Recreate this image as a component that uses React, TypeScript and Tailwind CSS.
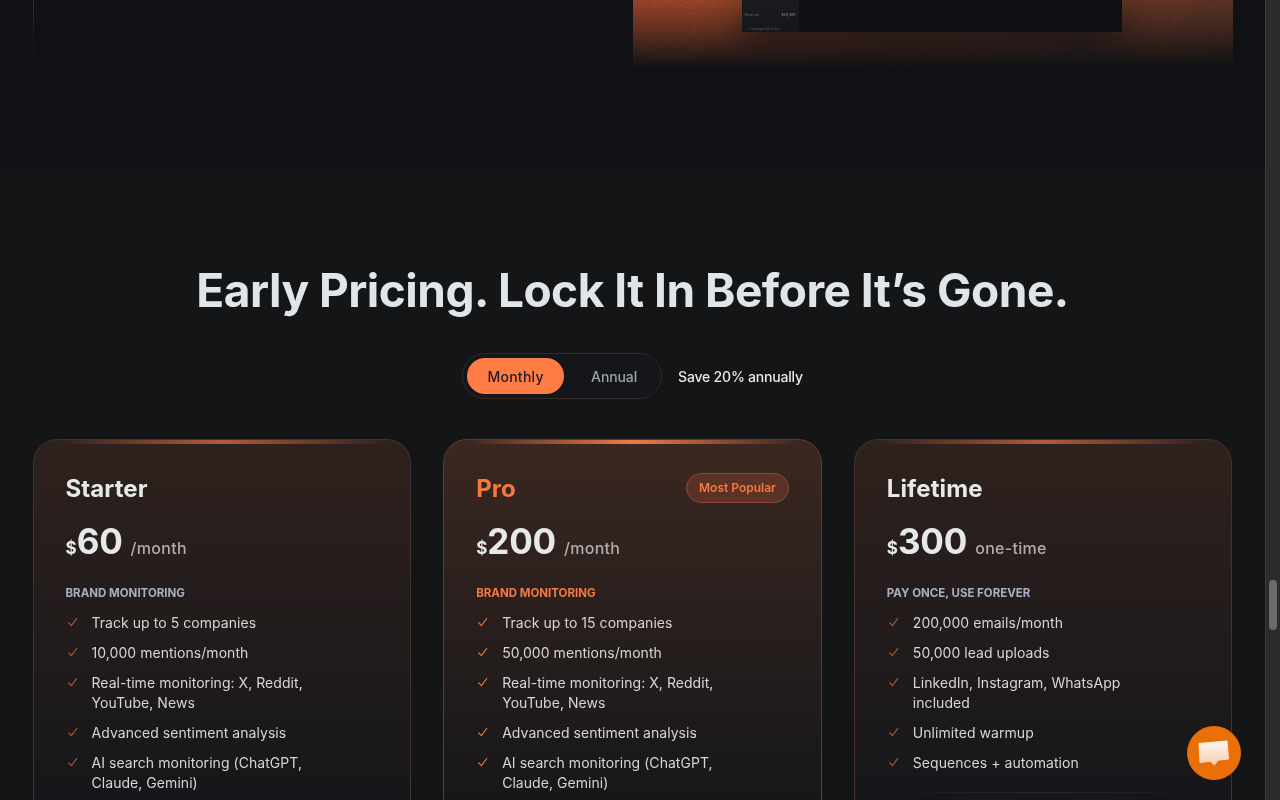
const font = { fontFamily: 'Inter, "Liberation Sans", sans-serif' };

function Check({ dim }: { dim?: boolean }) {
  return (
    <svg width="14" height="14" viewBox="0 0 14 14" fill="none" className={`mt-[2px] shrink-0 ${dim ? 'opacity-70' : ''}`}>
      <path d="M2.5 7.5 L5.4 10.6 L11 3.2" stroke="#e8703f" strokeWidth="1.1" />
    </svg>
  );
}

type Plan = {
  name: string;
  price: string;
  per: string;
  label: string;
  features: string[];
  pro?: boolean;
  divider?: boolean;
};

const plans: Plan[] = [
  {
    name: 'Starter',
    price: '60',
    per: '/month',
    label: 'BRAND MONITORING',
    features: ['Track up to 5 companies', '10,000 mentions/month', 'Real-time monitoring: X, Reddit, YouTube, News', 'Advanced sentiment analysis', 'AI search monitoring (ChatGPT, Claude, Gemini)'],
  },
  {
    name: 'Pro',
    price: '200',
    per: '/month',
    label: 'BRAND MONITORING',
    pro: true,
    features: ['Track up to 15 companies', '50,000 mentions/month', 'Real-time monitoring: X, Reddit, YouTube, News', 'Advanced sentiment analysis', 'AI search monitoring (ChatGPT, Claude, Gemini)'],
  },
  {
    name: 'Lifetime',
    price: '300',
    per: 'one-time',
    label: 'PAY ONCE, USE FOREVER',
    divider: true,
    features: ['200,000 emails/month', '50,000 lead uploads', 'LinkedIn, Instagram, WhatsApp included', 'Unlimited warmup', 'Sequences + automation'],
  },
];

function Card({ plan }: { plan: Plan }) {
  return (
    <div
      className={`relative h-[420px] rounded-[24px] border px-8 pt-[34px] ${
        plan.pro
          ? 'border-[#5c3c30] bg-gradient-to-b from-[#3b2720] to-[#15161a] to-[90%]'
          : 'border-[#44322b] bg-gradient-to-b from-[#2f211d] to-[#15161a] to-[90%]'
      }`}
    >
      <div
        className={`absolute left-[24px] right-[24px] top-0 h-[4px] bg-gradient-to-r from-transparent to-transparent ${
          plan.pro ? 'via-[#f07a4a]' : 'via-[#b25c3a]'
        }`}
      />
      <div className="flex h-[30px] items-center justify-between">
        <h3 className={`text-[24px] font-bold tracking-[0.1px] ${plan.pro ? 'text-[#f5793f]' : 'text-[#e6e8ea]'}`}>{plan.name}</h3>
        {plan.pro && (
          <span className="mb-[2px] rounded-full border border-[#8a4a33] bg-[#5a3226] px-[12px] py-[7px] text-[12px] font-semibold leading-[14px] text-[#f5793f]">
            Most Popular
          </span>
        )}
      </div>
      <div className="mt-[11px] flex h-[44px] items-baseline text-[#e6e8ea]">
        <span className="text-[17px] font-bold">$</span>
        <span className="text-[35px] font-bold tracking-[-0.2px]">{plan.price}</span>
        <span className="ml-[8px] text-[16px] font-medium tracking-[0.3px] text-[#b0aeac]">{plan.per}</span>
      </div>
      <div className={`mt-[26px] text-[11.5px] font-bold leading-[16px] ${plan.pro ? 'text-[#f5793f]' : 'text-[#a8afc0]'}`}>{plan.label}</div>
      <ul className="mt-[12px] flex w-[262px] flex-col gap-[10px]">
        {plan.features.map((f) => (
          <li key={f} className="flex gap-[12px] text-[14px] leading-[20px] tracking-[0.05px] text-[#d6d6d6]">
            <Check dim={!plan.pro} />
            <span>{f}</span>
          </li>
        ))}
      </ul>
      {plan.divider && <div className="-mx-[6px] mt-[19px] h-px bg-gradient-to-r from-transparent via-[#2c2726] to-transparent" />}
    </div>
  );
}

function Preview() {
  return (
    <div className="relative h-[68px] w-[600px] overflow-hidden bg-gradient-to-r from-[#853a22] from-[15%] to-[#4e2b1f]">
      <svg className="absolute inset-0 h-full w-full opacity-60 mix-blend-overlay" aria-hidden="true">
        <filter id="grain">
          <feTurbulence type="fractalNoise" baseFrequency="0.9" numOctaves="2" />
          <feColorMatrix type="saturate" values="0" />
        </filter>
        <rect width="100%" height="100%" filter="url(#grain)" />
      </svg>
      <div className="relative ml-[109px] flex h-[32px] w-[380px] bg-[#0f1013] shadow-[0_14px_36px_rgba(15,17,20,0.85)]">
        <div className="w-[57px] bg-[#1a1b1e] px-[3px] text-[#7d7d7d]">
          <div className="flex justify-between pt-[12px] text-[3.5px] leading-[6px] blur-[0.3px]">
            <span>Revenue</span>
            <span className="text-[#b5b5b5]">$24,500</span>
          </div>
          <div className="mt-[8px] pl-[3px] text-[3.5px] leading-[6px] blur-[0.3px]">◦ Dialogue Modules</div>
        </div>
      </div>
      <div className="absolute inset-0 bg-gradient-to-b from-[#0f1114]/0 via-[#0f1114]/40 via-[45%] to-[#0f1114]" />
    </div>
  );
}

export default function App() {
  return (
    <div className="relative h-[800px] w-[1280px] overflow-hidden bg-[#131517]" style={font}>
      <div className="w-[1265px]">
        <section className="h-[169px] bg-[#0f1114]">
          <div className="mx-auto flex w-[1200px] justify-between">
            <div className="h-[64px] w-px bg-gradient-to-b from-[#3a2825] to-transparent" />
            <Preview />
          </div>
        </section>
        <section className="bg-[#131517] pt-[91px]">
          <h2 className="text-center text-[46px] font-bold leading-[60px] tracking-[-0.5px] text-[#e2e5e8]">
            Early Pricing. Lock It In Before It’s Gone.
          </h2>
          <div className="mt-[33px] flex items-center justify-center gap-4">
            <div className="flex h-[46px] w-[200px] items-center rounded-full border border-[#352a27] bg-[#14161a] px-1">
              <button className="h-[36px] w-[97px] rounded-full bg-[#ff7d45] text-[14px] font-medium tracking-[0.25px] text-[#1b1c24]">Monthly</button>
              <button className="h-[36px] flex-1 pl-[7px] text-[14px] font-medium tracking-[-0.1px] text-[#9ca1ad]">Annual</button>
            </div>
            <span className="text-[14px] font-medium tracking-[-0.2px] text-[#e6e8ea]">Save 20% annually</span>
          </div>
          <div className="mx-auto mt-[40px] grid w-[1200px] grid-cols-3 gap-8">
            {plans.map((p) => (
              <Card key={p.name} plan={p} />
            ))}
          </div>
        </section>
      </div>

      {/* browser scrollbar */}
      <div className="absolute right-0 top-0 h-full w-[15px] border-l border-[#3a3a3a] bg-[#2b2b2b]">
        <div className="absolute left-[3px] top-[580px] h-[50px] w-[8px] rounded-full bg-[#6b6b6b]" />
      </div>

      {/* chat launcher */}
      <button className="absolute left-[1187px] top-[726px] flex h-[54px] w-[54px] items-center justify-center rounded-full bg-[#eb6f08]">
        <svg width="34" height="30" viewBox="0 0 34 30" aria-hidden="true">
          <defs>
            <linearGradient id="chat" x1="0" y1="0" x2="0" y2="1">
              <stop offset="0" stopColor="#fdf5ee" />
              <stop offset="1" stopColor="#f6cfae" />
            </linearGradient>
          </defs>
          <path d="M2 5.5 L30 3 L31.5 21 L21 22.2 L17.5 27 L13.5 23.3 L3 24.5 Z" fill="url(#chat)" stroke="url(#chat)" strokeWidth="1" strokeLinejoin="round" />
        </svg>
      </button>
    </div>
  );
}
